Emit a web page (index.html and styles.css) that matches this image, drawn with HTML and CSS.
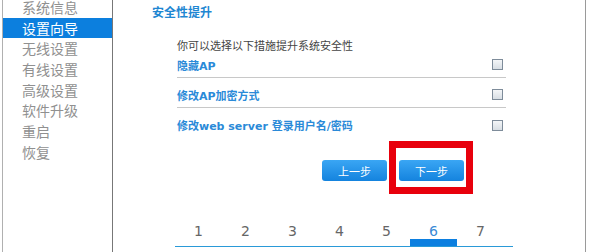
FILE: index.html
```html
<!DOCTYPE html>
<html lang="zh-CN">
<head>
  <meta charset="UTF-8" />
  <title>设置向导</title>
  <link rel="stylesheet" href="styles.css">
</head>
<body>
  <div class="page">
    <ul class="menu">
      <li>系统信息</li>
      <li class="active">设置向导</li>
      <li>无线设置</li>
      <li>有线设置</li>
      <li>高级设置</li>
      <li>软件升级</li>
      <li>重启</li>
      <li>恢复</li>
    </ul>

    <div class="main">
      <h2 class="title">安全性提升</h2>

      <div class="panel">
        <p class="intro">你可以选择以下措施提升系统安全性</p>
        <ul class="options">
          <li><span class="label">隐藏AP</span><span class="check"></span></li>
          <li><span class="label">修改AP加密方式</span><span class="check"></span></li>
          <li><span class="label">修改web server 登录用户名/密码</span><span class="check"></span></li>
        </ul>

        <div class="actions">
          <button type="button">上一步</button>
          <span class="next-wrap">
            <button type="button">下一步</button>
            <span class="highlight"></span>
          </span>
        </div>
      </div>

      <ol class="steps">
        <li>1</li>
        <li>2</li>
        <li>3</li>
        <li>4</li>
        <li>5</li>
        <li class="current">6</li>
        <li>7</li>
      </ol>
    </div>
  </div>
</body>
</html>
```

FILE: styles.css
```css
body {
  margin: 0;
  background: #fff;
  font-family: "DejaVu Sans", "Noto Sans CJK SC", sans-serif;
}
.page {
  display: flex;
  height: 252px;
  overflow: hidden;
}
.menu {
  list-style: none;
  margin: -3px 0 0 2px;
  padding: 0;
  width: 109px;
  border-left: 1px solid #b0b0b0;
  border-right: 1px solid #777;
  font-family: "Noto Sans CJK SC", sans-serif;
  font-size: 14px;
  color: #909090;
}
.menu li {
  height: 20.7px;
  line-height: 20.7px;
  padding-left: 19px;
}
.menu li.active {
  background: #0c7fde;
  color: #fff;
}
.main {
  width: 433px;
  padding-left: 39px;
  border-right: 1px solid #9a9a9a;
}
.title {
  margin: 0;
  padding-top: 4px;
  font-size: 12px;
  line-height: 16px;
  color: #1f87d2;
  font-family: "Noto Sans CJK SC", sans-serif;
  font-weight: bold;
}
.panel {
  margin-left: 25px;
  width: 329px;
}
.intro {
  margin: 18px 0 -4px;
  font-size: 11px;
  line-height: 14px;
  color: #444;
  font-family: "Noto Sans CJK SC", sans-serif;
}
.options {
  list-style: none;
  margin: 0;
  padding: 0;
}
.options li {
  display: flex;
  align-items: center;
  justify-content: space-between;
  box-sizing: border-box;
  height: 30px;
  padding-top: 4px;
  border-bottom: 1px solid #c8c8c8;
}
.options li:last-child {
  border-bottom: none;
}
.label {
  font-size: 11px;
  font-weight: bold;
  color: #2a8ad8;
}
.check {
  width: 9px;
  height: 9px;
  margin-right: 3px;
  border: 1px solid #7e8c9a;
  background: linear-gradient(#f4f6f8, #d8dee4);
}
.actions {
  display: flex;
  gap: 12px;
  margin-top: 22px;
  padding-left: 145px;
}
.actions button {
  width: 65px;
  height: 21px;
  border: none;
  border-radius: 3px;
  background: linear-gradient(#3aa6f4, #1483de);
  color: #fff;
  font-family: "Noto Sans CJK SC", sans-serif;
  font-size: 11px;
  padding: 0;
}
.next-wrap {
  position: relative;
  display: block;
}
.highlight {
  position: absolute;
  left: -10px;
  top: -19px;
  right: -9px;
  bottom: -13px;
  border: 7px solid #e8000c;
}
.steps {
  display: flex;
  list-style: none;
  margin: 41px 0 0 23px;
  padding: 0;
  width: 338px;
  border-bottom: 1px solid #2a9ad8;
}
.steps li {
  flex: 0 0 47px;
  height: 24px;
  line-height: 18px;
  text-align: center;
  font-size: 14px;
  color: #666;
}
.steps li.current {
  color: #3a8ad6;
  box-shadow: inset 0 -7px 0 #0c7fe0;
}
```
